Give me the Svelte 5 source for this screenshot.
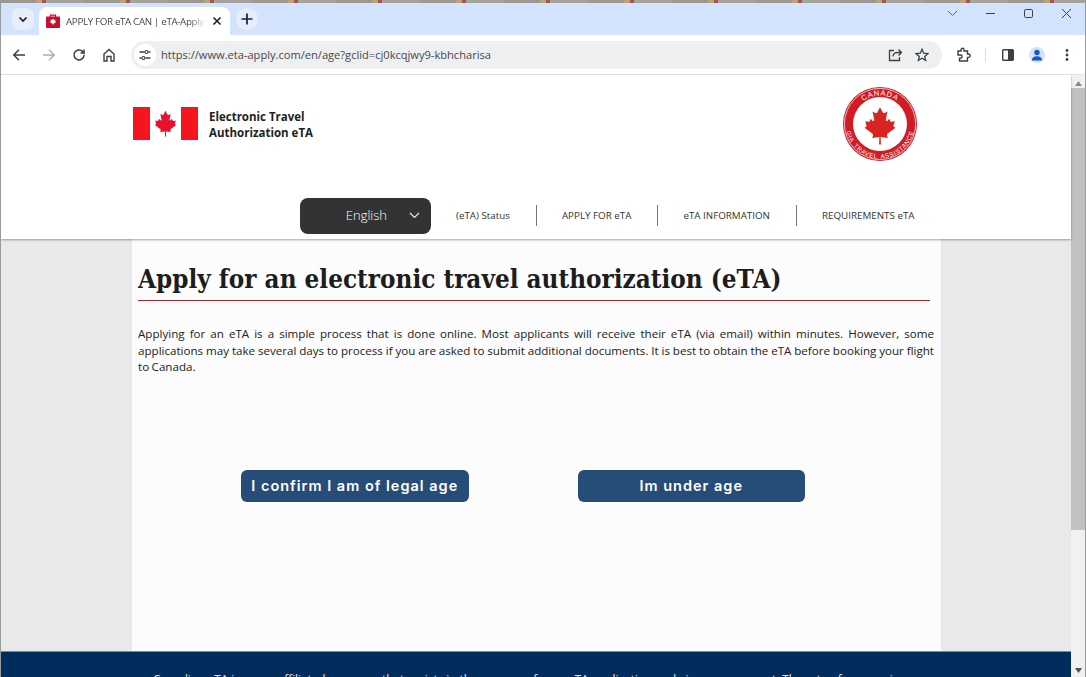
<script>
	const leaf = "M50 4 L59 21 C61 24 64 24 67 22 L74 18 L69 44 C68 49 72 50 75 47 L80 41 L83 49 C84 51 86 51 88 51 L98 49 L94 62 C93 65 94 67 96 68 L100 70 L75 89 C73 91 72 93 73 96 L75 103 L52 100 L53 124 L47 124 L48 100 L25 103 L27 96 C28 93 27 91 25 89 L0 70 L4 68 C6 67 7 65 6 62 L2 49 L12 51 C14 51 16 51 17 49 L20 41 L25 47 C28 50 32 49 31 44 L26 18 L33 22 C36 24 39 24 41 21 Z";
	const links = ["(eTA) Status", "APPLY FOR eTA", "eTA INFORMATION", "REQUIREMENTS eTA"];
</script>

<div class="window">
	<div class="wallpaper"></div>

	<div class="tabstrip">
		<button class="tab-search" aria-label="Search tabs">
			<svg width="12" height="12" viewBox="0 0 12 12"><path d="M2.5 4.5 6 8l3.5-3.5" fill="none" stroke="#1f1f1f" stroke-width="1.7"/></svg>
		</button>
		<div class="tab">
			<svg class="favicon" width="14" height="14" viewBox="0 0 14 14">
				<path d="M4.5 3V1.2h5V3" fill="none" stroke="#c8102e" stroke-width="1.2"/>
				<rect y="2.6" width="14" height="11.4" rx="1" fill="#c8102e"/>
				<path d="M7 4.5 8 6l1.4-.5-.4 2 1-.3-.4 1.300L7.300 9.800V11h-.6V9.800L4.400 8.500 4 7.200l1 .3-.4-2L6 6z" fill="#fff"/>
			</svg>
			<span class="tab-title">APPLY FOR eTA CAN | eTA-Apply</span>
			<svg class="tab-close" width="10" height="10" viewBox="0 0 10 10"><path d="M1.500 1.500l7 7M8.500 1.500l-7 7" stroke="#1f1f1f" stroke-width="1.600"/></svg>
		</div>
		<button class="new-tab" aria-label="New tab">
			<svg width="12" height="12" viewBox="0 0 12 12"><path d="M6 0.500v11M0.500 6h11" stroke="#15233f" stroke-width="1.700"/></svg>
		</button>
		<div class="window-controls">
			<svg width="11" height="11" viewBox="0 0 11 11"><path d="M1 3l4.500 4.500L10 3" fill="none" stroke="#5a6472" stroke-width="1"/></svg>
			<svg width="11" height="11" viewBox="0 0 11 11"><path d="M1 5.500h9" stroke="#3c4043" stroke-width="1"/></svg>
			<svg width="11" height="11" viewBox="0 0 11 11"><rect x="1.500" y="1.500" width="8" height="8" rx="1.200" fill="none" stroke="#3c4043" stroke-width="1"/></svg>
			<svg width="11" height="11" viewBox="0 0 11 11"><path d="M1 1l9 9M10 1l-9 9" stroke="#3c4043" stroke-width="1"/></svg>
		</div>
	</div>

	<div class="toolbar">
		<svg class="nav-ic" width="14" height="14" viewBox="0 0 14 14"><path d="M13 7H2M7 1.800 1.800 7 7 12.200" fill="none" stroke="#3c4043" stroke-width="1.500"/></svg>
		<svg class="nav-ic" width="14" height="14" viewBox="0 0 14 14"><path d="M1 7h11M7 1.800 12.200 7 7 12.200" fill="none" stroke="#a9adb2" stroke-width="1.300"/></svg>
		<svg class="nav-ic" width="14" height="14" viewBox="0 0 14 14"><path d="M12 7a5 5 0 1 1-1.500-3.600L12 5V1.500M12 5H8.500" fill="none" stroke="#3c4043" stroke-width="1.500"/></svg>
		<svg class="nav-ic" width="14" height="14" viewBox="0 0 14 14"><path d="M2 13V6l5-4.500L12 6v7H9V8.500H5V13z" fill="none" stroke="#3c4043" stroke-width="1.400"/></svg>

		<div class="omnibox">
			<span class="site-ic">
				<svg width="12" height="12" viewBox="0 0 12 12"><path d="M0.500 3h5M9.500 3h2M0.500 9h2M6.500 9h5" stroke="#3c4043" stroke-width="1.300"/><circle cx="7.500" cy="3" r="1.500" fill="none" stroke="#3c4043" stroke-width="1.200"/><circle cx="4.500" cy="9" r="1.500" fill="none" stroke="#3c4043" stroke-width="1.200"/></svg>
			</span>
			<span class="url">https://www.eta-apply.com/en/age?gclid=cj0kcqjwy9-kbhcharisa</span>
			<svg class="omni-ic" width="14" height="14" viewBox="0 0 14 14"><path d="M6 2.500H1.500v10h10V9M5 8.500C5 6 7 4.500 9.500 4.500H13M10.500 1.500l3 3-3 3" fill="none" stroke="#3c4043" stroke-width="1.300"/></svg>
			<svg class="omni-ic" width="14" height="14" viewBox="0 0 14 14"><path d="M7 1.300 8.700 5.200l4.200.4-3.200 2.800.95 4.100L7 10.300l-3.650 2.200.95-4.100L1.100 5.600l4.200-.4z" fill="none" stroke="#3c4043" stroke-width="1.300"/></svg>
		</div>

		<svg class="ext-ic" width="15" height="15" viewBox="0 0 15 15"><path d="M2 4h3V2.800a1.500 1.500 0 0 1 3 0V4h3.500v3h1a1.700 1.700 0 0 1 0 3.400h-1V14H3.500v-2.800H4.500a1.600 1.600 0 0 0 0-3.200H2z" fill="none" stroke="#3c4043" stroke-width="1.400"/></svg>
		<span class="tool-sep"></span>
		<svg class="panel-ic" width="12" height="12" viewBox="0 0 12 12"><rect x="0.700" y="0.700" width="10.600" height="10.600" rx="1" fill="#fff" stroke="#3c4043" stroke-width="1.400"/><rect x="6" y="0.700" width="5.300" height="10.600" fill="#3c4043"/></svg>
		<span class="avatar">
			<svg width="12" height="12" viewBox="0 0 12 12"><circle cx="6" cy="3.500" r="2.700" fill="#1a56c4"/><path d="M0.800 11.500C1 8.500 3 7.300 6 7.300s5 1.200 5.200 4.200z" fill="#1a56c4"/></svg>
		</span>
		<svg class="menu-ic" width="4" height="14" viewBox="0 0 4 14"><circle cx="2" cy="2.500" r="1.400" fill="#3c4043"/><circle cx="2" cy="7" r="1.400" fill="#3c4043"/><circle cx="2" cy="11.500" r="1.400" fill="#3c4043"/></svg>
	</div>

	<div class="viewport">
		<div class="page">
			<header class="site-header">
				<div class="brand-row">
					<div class="brand">
						<div class="flag">
							<svg width="23" height="27" viewBox="0 0 100 126"><path d={leaf} fill="#e8112d"/></svg>
						</div>
						<div class="brand-name">Electronic Travel<br />Authorization eTA</div>
					</div>
					<svg class="seal" width="76" height="76" viewBox="0 0 76 76">
						<circle cx="38" cy="38" r="37" fill="#d01c24"/>
						<circle cx="38" cy="38" r="35.600" fill="none" stroke="#fff" stroke-width="0.700"/>
						<circle cx="38" cy="38" r="27" fill="#fff"/>
						<defs>
							<path id="arc-top" d="M9.500 38a28.500 28.500 0 0 1 57 0"/>
							<path id="arc-bottom" d="M3.500 38a34.500 34.500 0 0 0 69 0"/>
						</defs>
						<text class="seal-top"><textPath href="#arc-top" startOffset="50%" text-anchor="middle">CANADA</textPath></text>
						<text class="seal-bottom"><textPath href="#arc-bottom" startOffset="50%" text-anchor="middle">GIA TRAVEL ASSISTANCE</textPath></text>
						<svg x="22.500" y="20" width="31" height="39" viewBox="0 0 100 126"><path d={leaf} fill="#d9231f"/></svg>
					</svg>
				</div>
				<nav class="nav-row">
					<div class="lang">
						<span>English</span>
						<svg width="11" height="7" viewBox="0 0 11 7"><path d="M1 1l4.500 4.500L10 1" fill="none" stroke="#e8e8e8" stroke-width="1.200"/></svg>
					</div>
					<ul class="links">
						{#each links as link}
							<li>{link}</li>
						{/each}
					</ul>
				</nav>
			</header>

			<main class="content-wrap">
				<section class="content">
					<h1>Apply for an electronic travel authorization (eTA)</h1>
					<p>Applying for an eTA is a simple process that is done online. Most applicants will receive their eTA (via email) within minutes. However, some applications may take several days to process if you are asked to submit additional documents. It is best to obtain the eTA before booking your flight to Canada.</p>
					<div class="actions">
						<button class="age-btn">I confirm I am of legal age</button>
						<button class="age-btn">Im under age</button>
					</div>
				</section>
			</main>

			<footer class="site-footer">
				<p>Canadian eTA is a non-affiliated company that assists in the process of your eTA application and gives you support. The rate of our service</p>
			</footer>
		</div>

		<div class="scrollbar">
			<svg class="arrow" width="7" height="5" viewBox="0 0 7 5"><path d="M3.500 0 7 5H0z" fill="#8a8a8a"/></svg>
			<div class="thumb"></div>
			<svg class="arrow arrow-down" width="7" height="5" viewBox="0 0 7 5"><path d="M3.500 5 7 0H0z" fill="#505050"/></svg>
		</div>
	</div>
</div>

<style>
	:global(body) {
		background: #fff;
		overflow: hidden;
	}

	.window {
		height: 677px;
		display: flex;
		flex-direction: column;
		overflow: hidden;
		font-family: "Open Sans", sans-serif;
		background: #d3e3fd;
		border-left: 1px solid #9a9a9a;
		border-right: 1px solid #9a9a9a;
		box-sizing: border-box;
	}

	.wallpaper {
		height: 3px;
		margin: 0 -1px;
		background: repeating-linear-gradient(90deg, #9c9890 0 36px, #b9a27f 36px 42px, #a8584a 42px 46px, #a3a29c 46px 84px);
	}

	.tabstrip {
		height: 32px;
		display: flex;
		align-items: flex-end;
		flex: none;
	}

	.tab-search {
		width: 22px;
		height: 22px;
		margin: 0 5px 5px 11px;
		border: none;
		border-radius: 7px;
		background: #e6eefc;
		display: flex;
		align-items: center;
		justify-content: center;
		padding: 0;
	}

	.tab {
		width: 191px;
		height: 28px;
		padding: 0 8px 0 7px;
		box-sizing: border-box;
		background: #fff;
		border-radius: 8px 8px 0 0;
		display: flex;
		align-items: center;
	}

	.favicon {
		flex: none;
		margin-right: 6px;
	}

	.tab-title {
		flex: 1;
		overflow: hidden;
		white-space: nowrap;
		font-size: 9.800px;
		letter-spacing: -0.35px;
		color: #45484d;
		mask-image: linear-gradient(90deg, #000 88%, transparent);
	}

	.tab-close {
		flex: none;
		margin-left: 6px;
	}

	.new-tab {
		width: 22px;
		height: 22px;
		margin: 0 0 5px 6px;
		border: none;
		border-radius: 50%;
		background: #e6eefc;
		display: flex;
		align-items: center;
		justify-content: center;
		padding: 0;
	}

	.window-controls {
		margin-left: auto;
		align-self: flex-start;
		display: flex;
		gap: 27px;
		padding: 5px 13px 0 0;
	}

	.toolbar {
		height: 39px;
		flex: none;
		background: #fff;
		display: flex;
		align-items: center;
		border-bottom: 1px solid #e6e6e6;
		box-sizing: content-box;
		padding-left: 11px;
	}

	.nav-ic {
		margin-right: 16px;
		flex: none;
	}

	.omnibox {
		width: 811px;
		height: 28px;
		margin-left: -1px;
		border-radius: 14px;
		background: #eeeff0;
		display: flex;
		align-items: center;
		flex: none;
	}

	.site-ic {
		width: 22px;
		height: 22px;
		margin-left: 3px;
		border-radius: 50%;
		background: #fff;
		display: flex;
		align-items: center;
		justify-content: center;
	}

	.url {
		flex: 1;
		margin-left: 5px;
		font-size: 11.100px;
		color: #45484d;
		white-space: nowrap;
	}

	.omni-ic {
		margin-right: 13px;
		flex: none;
	}

	.ext-ic {
		margin-left: 14px;
		flex: none;
	}

	.tool-sep {
		width: 1px;
		height: 14px;
		margin-left: 14px;
		background: #d6dfea;
	}

	.panel-ic {
		margin-left: 16px;
		flex: none;
	}

	.avatar {
		width: 16px;
		height: 16px;
		margin-left: 15px;
		border-radius: 50%;
		background: #d3e3fd;
		display: flex;
		align-items: center;
		justify-content: center;
	}

	.menu-ic {
		margin-left: 20px;
		flex: none;
	}

	.viewport {
		flex: 1;
		min-height: 0;
		display: flex;
		background: #fff;
	}

	.page {
		flex: 1;
		min-width: 0;
		display: flex;
		flex-direction: column;
	}

	.site-header {
		height: 164px;
		flex: none;
		background: #fff;
		box-shadow: 0 1px 2px rgba(0, 0, 0, 0.35);
		position: relative;
		box-sizing: border-box;
	}

	.brand-row {
		display: flex;
		justify-content: space-between;
		height: 123px;
		padding: 11px 153px 0 132px;
		box-sizing: border-box;
	}

	.brand {
		display: flex;
		align-items: flex-start;
		padding-top: 21px;
	}

	.flag {
		width: 65px;
		height: 33px;
		display: flex;
		align-items: center;
		justify-content: center;
		background: linear-gradient(90deg, #f4151f 0 17px, #fff 17px 48px, #f4151f 48px);
	}

	.brand-name {
		margin: 2px 0 0 11px;
		font-size: 11.500px;
		font-weight: 700;
		line-height: 16px;
		color: #222;
	}

	.seal {
		flex: none;
	}

	.seal text {
		font-family: "Liberation Sans", sans-serif;
		font-weight: 400;
		fill: #fff;
	}

	.seal-top {
		font-size: 7.500px;
		letter-spacing: 0.8px;
	}

	.seal-bottom {
		font-size: 6.200px;
		letter-spacing: 0.7px;
		word-spacing: 1.5px;
	}

	.nav-row {
		display: flex;
		align-items: center;
		padding-left: 299px;
	}

	.lang {
		width: 131px;
		height: 36px;
		box-sizing: border-box;
		background: #333;
		border-radius: 8px;
		color: #fff;
		font-size: 13px;
		font-weight: 300;
		display: flex;
		align-items: center;
		justify-content: flex-end;
		gap: 22px;
		padding: 0 11px 2px 0;
	}

	.links {
		list-style: none;
		margin: 0;
		padding: 0 0 2px;
		display: flex;
		font-size: 9.800px;
		color: #333;
	}

	.links li {
		padding: 0 26px 0 25px;
		height: 21px;
		line-height: 21px;
		border-left: 1px solid #777;
		white-space: nowrap;
	}

	.links li:first-child {
		border-left: none;
	}

	.content-wrap {
		flex: 1;
		min-height: 0;
		background: #e9e9e9;
		padding: 0 130px 0 131px;
		display: flex;
	}

	.content {
		flex: 1;
		background: #fcfcfc;
		padding: 24px 7px 0 6px;
		box-sizing: border-box;
	}

	h1 {
		margin: 0 4px 0 0;
		padding-bottom: 4px;
		border-bottom: 1px solid #a8262c;
		font-family: "DejaVu Serif Condensed", "DejaVu Serif", serif;
		font-stretch: condensed;
		font-size: 25.800px;
		line-height: 33px;
		font-weight: 700;
		color: #1d1d1d;
		white-space: nowrap;
	}

	.content p {
		margin: 25px 0 0;
		font-size: 11.600px;
		word-spacing: -0.5px;
		line-height: 16.500px;
		color: #222;
		text-align: justify;
	}

	.actions {
		margin-top: 94px;
		padding-left: 103px;
		display: flex;
		gap: 109px;
	}

	.age-btn {
		width: 227.500px;
		height: 32px;
		border: none;
		border-radius: 6px;
		background: #264d78;
		color: #fff;
		font-family: "Inter", sans-serif;
		font-weight: 600;
		font-size: 14.500px;
		letter-spacing: 1px;
		padding: 0;
	}

	.site-footer {
		height: 26px;
		flex: none;
		background: #002d5c;
		border-top: 1px solid #6f8fa8;
		overflow: hidden;
		box-sizing: border-box;
	}

	.site-footer p {
		margin: 19px 0 0;
		padding-right: 14px;
		text-align: center;
		font-size: 11.750px;
		line-height: 16px;
		color: #e8e8e8;
		white-space: nowrap;
	}

	.scrollbar {
		width: 14px;
		flex: none;
		background: #f1f1f1;
		display: flex;
		flex-direction: column;
		align-items: center;
	}

	.arrow {
		margin-top: 6px;
		flex: none;
	}

	.thumb {
		width: 100%;
		height: 442px;
		margin-top: 2px;
		background: #c1c1c1;
	}

	.arrow-down {
		margin-top: auto;
		margin-bottom: 4px;
	}
</style>
